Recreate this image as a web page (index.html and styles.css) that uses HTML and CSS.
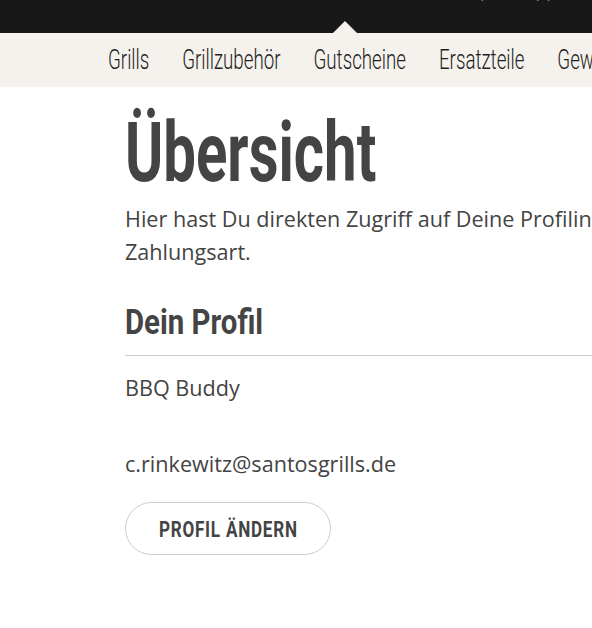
FILE: index.html
```html
<!DOCTYPE html>
<html>

<head>
  <title>Übersicht</title>
  <meta name="viewport" content="width=device-width, initial-scale=1.0">
  <link rel="stylesheet" href="styles.css">
</head>

<body>
  <header class="topbar">
    <div class="topbar-inner">
      <span class="brand">MEIN KONTO</span>
      <span class="top-icon">|</span>
      <span class="top-icon">| |</span>
      <span class="top-icon">|</span>
    </div>
    <span class="pointer"></span>
  </header>

  <nav class="mainnav">
    <div class="navlist">
      <a href="#">Grills</a>
      <a href="#">Grillzubehör</a>
      <a href="#">Gutscheine</a>
      <a href="#">Ersatzteile</a>
      <a href="#">Gewürze</a>
    </div>
  </nav>

  <main class="content">
    <h1>Übersicht</h1>
    <p class="intro">Hier hast Du direkten Zugriff auf Deine Profilinformationen, Deine Adressen und Deine bevorzugte
      Zahlungsart.</p>

    <section class="profile">
      <h2><span class="condensed">Dein Profil</span></h2>
      <p class="name">BBQ Buddy</p>
      <p class="email">c.rinkewitz@santosgrills.de</p>
      <button type="button"><span class="condensed">Profil ändern</span></button>
    </section>
  </main>
</body>

</html>
```

FILE: styles.css
```css
body {
  margin: 0;
  font-family: 'Open Sans', sans-serif;
  color: #444;
  background: white;
  width: 592px;
  overflow: hidden;
}

/* no condensed face installed, so headings get squeezed */
.condensed {
  display: inline-block;
  transform-origin: left center;
}

.topbar {
  position: relative;
  height: 33px;
  background: #181818;
  overflow: hidden;
}

.topbar-inner {
  display: flex;
  gap: 50px;
  padding-left: 298px;
  margin-top: -19px;
  font-family: Roboto, sans-serif;
  font-weight: bold;
  font-size: 22px;
  line-height: 20px;
  color: #eee;
  white-space: nowrap;
}

.top-icon {
  color: #777;
  font-weight: normal;
}

.pointer {
  position: absolute;
  left: 333px;
  bottom: 0;
  width: 0;
  height: 0;
  border-left: 12px solid transparent;
  border-right: 12px solid transparent;
  border-bottom: 12px solid #f5f2ed;
}

.mainnav {
  height: 54px;
  padding-left: 108px;
  background: #f5f2ed;
  overflow: hidden;
}

.navlist {
  display: flex;
  gap: 49px;
  white-space: nowrap;
  transform: scaleX(0.67);
  transform-origin: left center;
  font-family: Roboto, sans-serif;
  font-weight: 300;
  font-size: 28px;
  line-height: 54px;
}

.navlist a {
  color: #1e1e1e;
  text-decoration: none;
}

.content {
  width: 1100px;
  padding-left: 125px;
}

h1 {
  margin: 21px 0 0;
  font-family: Roboto, sans-serif;
  font-size: 83px;
  line-height: 90px;
  font-weight: bold;
  color: #444;
  transform: scaleX(0.7);
  transform-origin: left center;
}

.intro {
  margin: 4px 0 0;
  font-size: 21.6px;
  line-height: 33px;
}

h2 {
  margin: 33px 0 0;
  padding-bottom: 10px;
  border-bottom: 1px solid #ccc;
  font-family: Roboto, sans-serif;
  font-size: 35px;
  line-height: 44px;
  font-weight: bold;
  color: #444;
}

h2 .condensed {
  transform: scaleX(0.84);
}

.profile p {
  margin: 0;
  font-size: 21.6px;
  line-height: 33px;
}

.profile .name {
  margin-top: 15px;
}

.profile .email {
  margin-top: 43px;
}

button {
  display: block;
  margin-top: 22px;
  width: 206px;
  height: 53px;
  padding: 0;
  background: white;
  border: 1px solid #ccc;
  border-radius: 27px;
  font-family: Roboto, sans-serif;
  font-weight: bold;
  font-size: 22.5px;
  text-transform: uppercase;
  letter-spacing: 1px;
  color: #444;
  cursor: pointer;
}

button .condensed {
  transform: scaleX(0.76);
  transform-origin: center;
}
```
